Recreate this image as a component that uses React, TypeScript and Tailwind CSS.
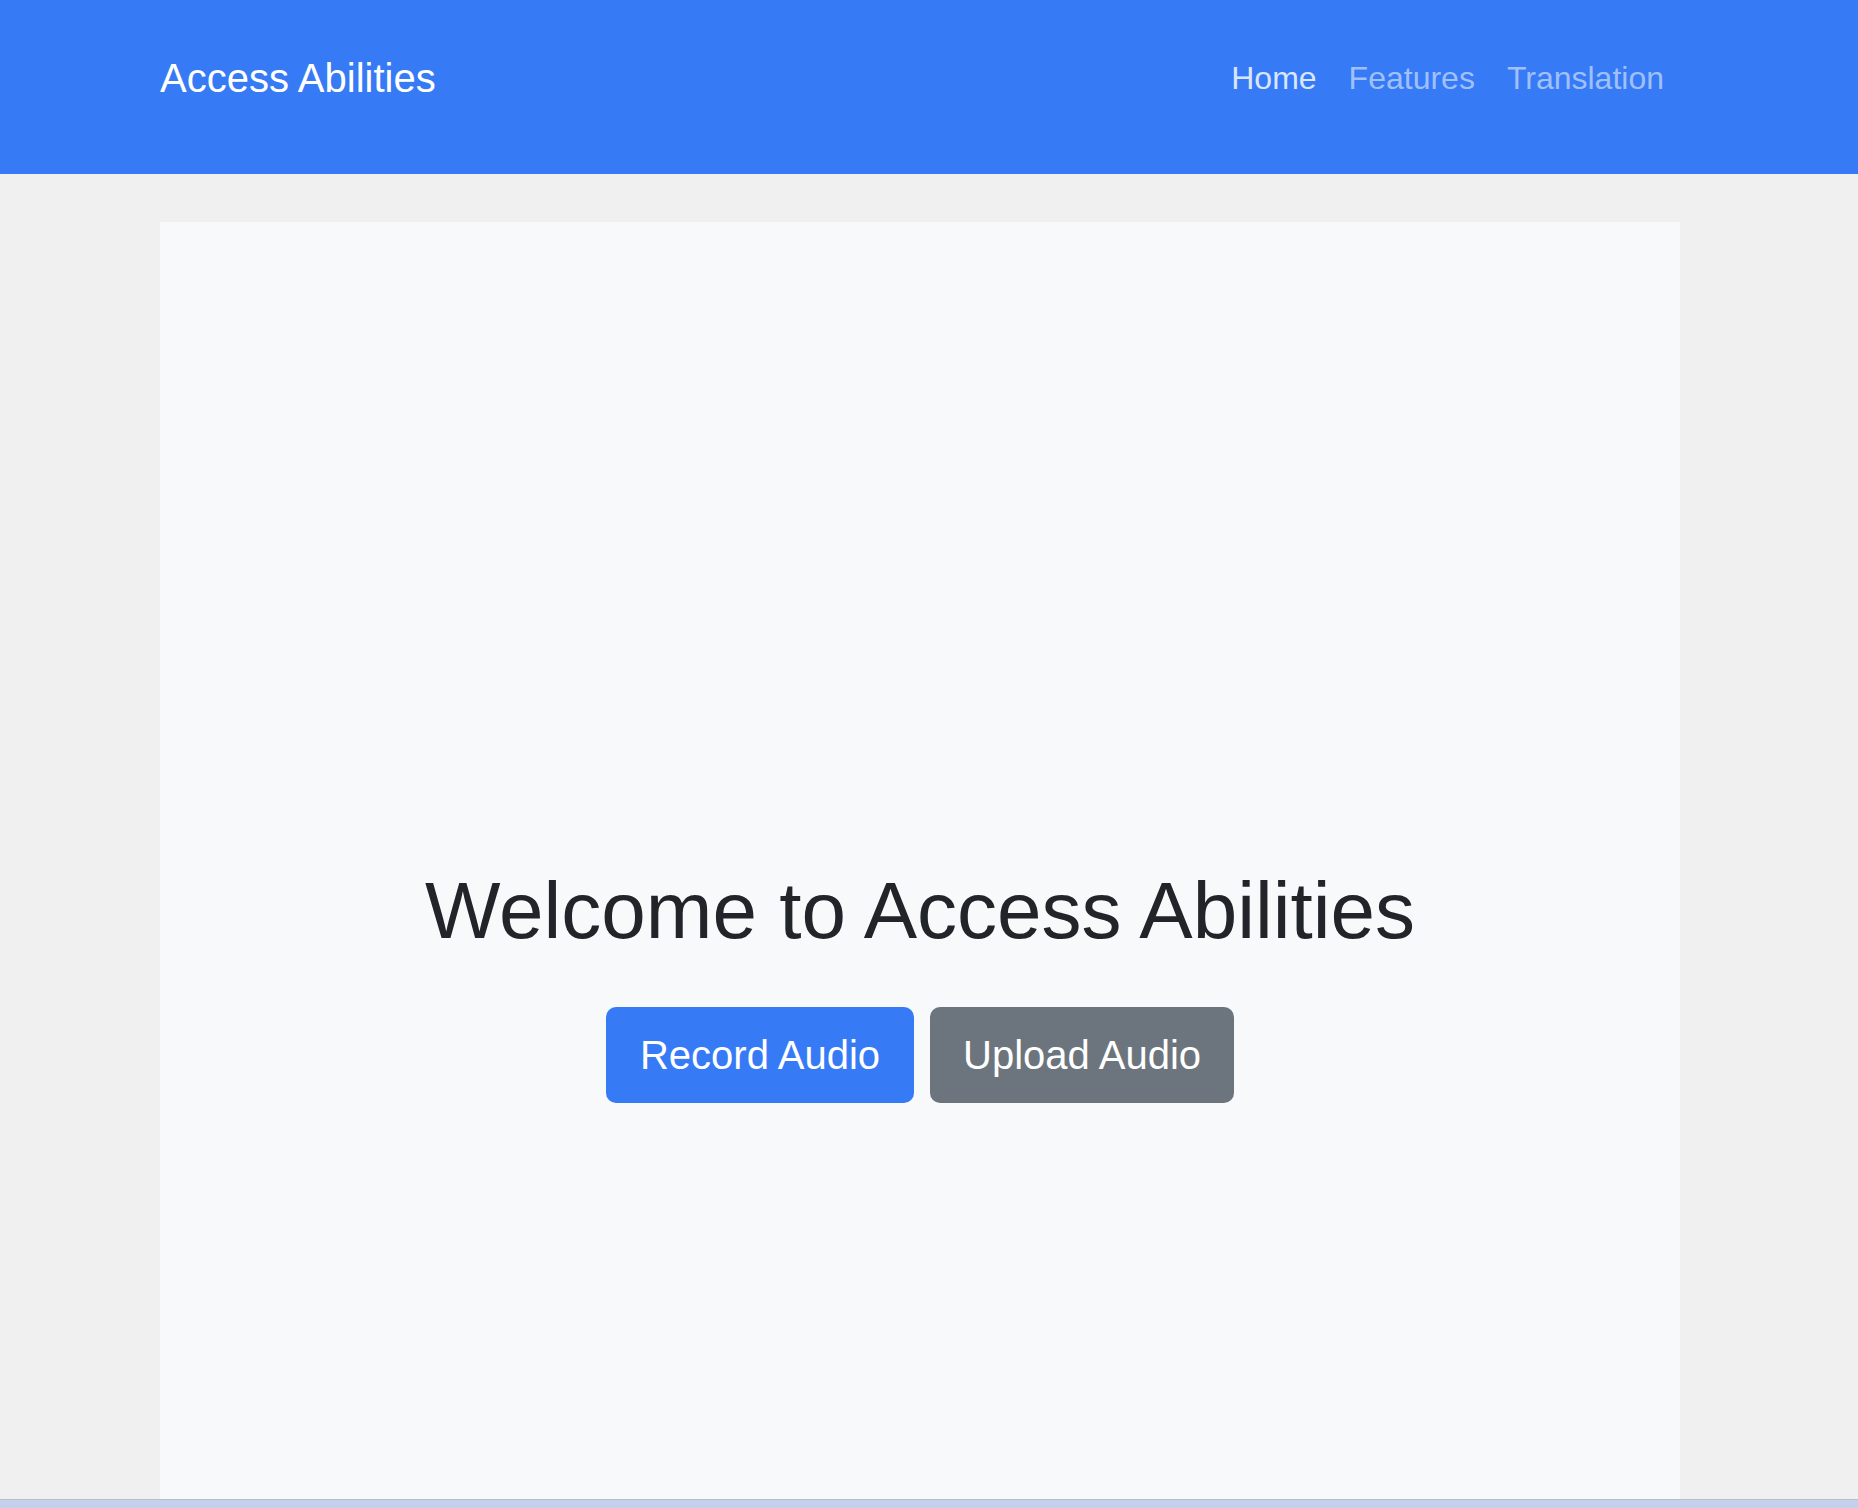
import React from "react";

export default function App() {
  return (
    <div
      className="h-[1508px] w-full overflow-hidden flex flex-col bg-[#f0f0f0]"
      style={{ fontFamily: '"Liberation Sans", Arial, Helvetica, sans-serif' }}
    >
      <nav className="h-[174px] shrink-0 bg-[#367af6]">
        <div className="ml-[160px] w-[1520px] h-[156px] flex items-center justify-between">
          <a className="text-[40px] leading-[60px] text-white">Access Abilities</a>
          <ul className="flex items-center">
            <li>
              <a className="block px-4 text-[32px] leading-[48px] text-[#d9e6fd]">Home</a>
            </li>
            <li>
              <a className="block px-4 text-[32px] leading-[48px] text-[#9fc0fb]">Features</a>
            </li>
            <li>
              <a className="block px-4 text-[32px] leading-[48px] text-[#9fc0fb]">Translation</a>
            </li>
          </ul>
        </div>
      </nav>
      <main className="flex-1 min-h-0 pt-[48px]">
        <div className="ml-[160px] w-[1520px] h-full bg-[#f8f9fa] pt-[641px] flex flex-col items-center">
          <h1 className="text-[80px] leading-[96px] text-[#212529] mb-[48px]">
            Welcome to Access Abilities
          </h1>
          <div className="flex gap-4">
            <button className="bg-[#367af6] text-white text-[40px] leading-[60px] px-[34px] py-[18px] rounded-[10px]">
              Record Audio
            </button>
            <button className="bg-[#6c757d] text-white text-[40px] leading-[60px] px-[33px] py-[18px] rounded-[10px]">
              Upload Audio
            </button>
          </div>
        </div>
      </main>
      <div className="h-[1px] shrink-0 bg-[#b9bdc4]" />
      <div className="h-[8px] shrink-0 bg-[#c5d1ec]" />
    </div>
  );
}
